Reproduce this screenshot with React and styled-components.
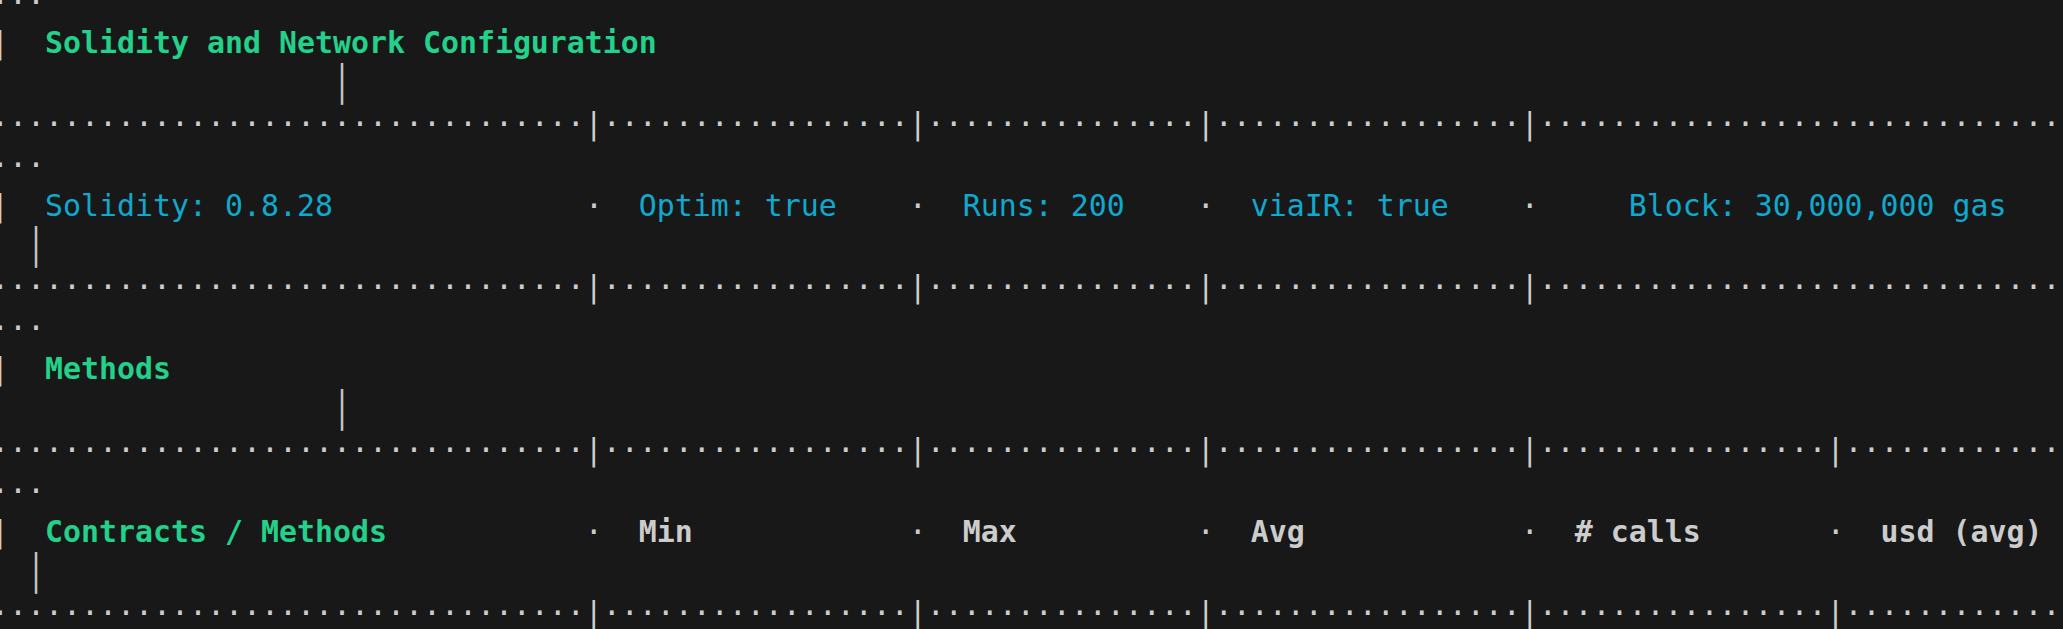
import React from 'react'
import styled, { createGlobalStyle } from 'styled-components'

const COLS = 116

// builds one terminal line from [startColumn, text, tone] parts
function place(parts) {
  let col = 0
  return parts.map(([start, text, tone]) => {
    const pad = ' '.repeat(Math.max(0, start - col))
    col = Math.max(col, start) + [...text].length
    return { text: pad + text, tone }
  })
}

function dotRow(pipes) {
  let s = ''
  for (let i = 0; i < COLS; i++) s += pipes.includes(i) ? '|' : '·'
  return [{ text: s, tone: 'frame' }]
}

const configPipes = [33, 51, 67, 85]
const methodPipes = [33, 51, 67, 85, 102]

const wrapDots = [{ text: '···', tone: 'frame' }]
const wrapTitleBar = [{ text: ' '.repeat(19), tone: 'frame' }, { text: '│', tone: 'bar' }]
const wrapRowBar = [{ text: '  ', tone: 'frame' }, { text: '│', tone: 'bar' }]

const lines = [
  wrapDots,
  place([[0, '|', 'frame'], [3, 'Solidity and Network Configuration', 'title']]),
  wrapTitleBar,
  dotRow(configPipes),
  wrapDots,
  place([
    [0, '|', 'frame'],
    [3, 'Solidity: 0.8.28', 'info'],
    [33, '·', 'frame'],
    [36, 'Optim: true', 'info'],
    [51, '·', 'frame'],
    [54, 'Runs: 200', 'info'],
    [67, '·', 'frame'],
    [70, 'viaIR: true', 'info'],
    [85, '·', 'frame'],
    [91, 'Block: 30,000,000 gas', 'info'],
  ]),
  wrapRowBar,
  dotRow(configPipes),
  wrapDots,
  place([[0, '|', 'frame'], [3, 'Methods', 'title']]),
  wrapTitleBar,
  dotRow(methodPipes),
  wrapDots,
  place([
    [0, '|', 'frame'],
    [3, 'Contracts / Methods', 'title'],
    [33, '·', 'frame'],
    [36, 'Min', 'head'],
    [51, '·', 'frame'],
    [54, 'Max', 'head'],
    [67, '·', 'frame'],
    [70, 'Avg', 'head'],
    [85, '·', 'frame'],
    [88, '# calls', 'head'],
    [102, '·', 'frame'],
    [105, 'usd (avg)', 'head'],
  ]),
  wrapRowBar,
  dotRow(methodPipes),
]

const tones = {
  frame: { color: '#cccccc', weight: 400 },
  bar: { color: '#c4c4c4', weight: 400 },
  title: { color: '#23d18b', weight: 700 },
  info: { color: '#11a8cd', weight: 400 },
  head: { color: '#cccccc', weight: 700 },
}

export default function App() {
  return (
    <Screen>
      <GlobalStyle />
      <Terminal>
        {lines.map((segs, i) => (
          <Line key={i}>
            {segs.map((s, j) =>
              s.tone === 'bar' ? (
                <Bar key={j}>{s.text}</Bar>
              ) : (
                <Seg key={j} $tone={s.tone}>{s.text}</Seg>
              )
            )}
          </Line>
        ))}
      </Terminal>
    </Screen>
  )
}

const GlobalStyle = createGlobalStyle`
  html, body {
    margin: 0;
    padding: 0;
    background: #181818;
    overflow: hidden;
  }
`;

const Screen = styled.div`
  width: 100vw;
  height: 100vh;
  background: #181818;
  overflow: hidden;
`;

const Terminal = styled.div`
  margin: -18px 0 0 -9px;
  font-family: "DejaVu Sans Mono", "Liberation Mono", monospace;
  font-size: 29.9px;
  line-height: 40.75px;
  color: #cccccc;
`;

const Line = styled.div`
  height: 40.75px;
  white-space: pre;
`;

const Seg = styled.span`
  color: ${p => tones[p.$tone].color};
  font-weight: ${p => tones[p.$tone].weight};
`;

const Bar = styled.span`
  display: inline-block;
  color: ${tones.bar.color};
  transform: scaleY(1.18);
`;
